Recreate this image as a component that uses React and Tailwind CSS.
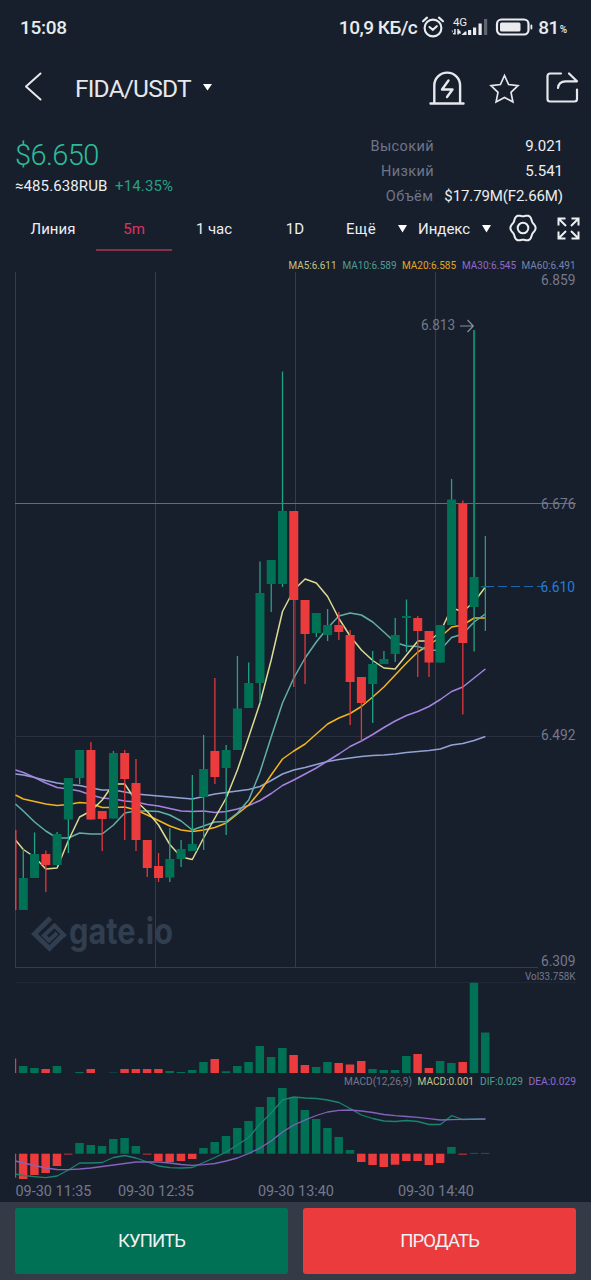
import React from 'react';

// [direction, high, body top, body bottom, low] in chart pixels
const CANDLES = [
  ['up', 849, 878, 910, 910],
  ['up', 832.5, 854, 878, 878],
  ['down', 850.5, 854, 865, 892],
  ['up', 832, 834, 865, 865],
  ['up', 778, 778, 819.5, 853],
  ['up', 750, 750, 778, 784],
  ['down', 742, 750, 819.5, 820],
  ['down', 811, 811, 819, 851],
  ['up', 751, 753, 818.5, 818.5],
  ['down', 750, 753, 779, 840],
  ['down', 759, 783, 840, 851],
  ['down', 840, 840, 868, 877],
  ['down', 853, 866, 878, 882],
  ['up', 828, 859, 877.5, 882],
  ['up', 840, 849, 859, 867],
  ['up', 775, 844, 851, 851],
  ['up', 735, 769, 797, 850],
  ['down', 678, 751, 777, 784],
  ['up', 745, 750, 768, 835],
  ['up', 656, 708.5, 750, 750],
  ['up', 662.5, 683, 708, 708],
  ['up', 561.5, 593, 683, 703],
  ['up', 560, 560, 584, 612],
  ['up', 371.5, 511, 584, 587],
  ['down', 511, 511, 600, 687],
  ['down', 600, 600, 634, 684],
  ['up', 613, 613, 633, 637],
  ['up', 609, 625, 635, 641],
  ['down', 612, 625, 632, 640],
  ['down', 630, 635, 682, 725],
  ['down', 677, 677, 703, 741],
  ['up', 651, 664, 684, 723],
  ['up', 651, 659, 664, 664],
  ['up', 618, 635, 654, 662],
  ['up', 599.5, 616, 618, 652],
  ['down', 616, 618, 631, 677],
  ['down', 631, 631, 662.5, 677],
  ['up', 625, 625, 662.5, 662.5],
  ['up', 479, 499.5, 625, 625],
  ['down', 500.5, 504, 643, 714.5],
  ['up', 330, 577, 607, 651.5],
  ['up', 536, 586, 587.5, 631],
];

// first value sits on the left edge, the rest on the candle centres
const MA_LINES = [
  {
    color: '#93a3d6',
    values: [774, 775, 777.5, 780.5, 783, 784.5, 785.5, 788, 790, 790, 792, 794, 795, 796, 797, 798, 799, 796.5, 794, 792.5, 791, 789.5, 786.5, 780.5, 774, 770, 767.5, 764.5, 761.5, 759.5, 758, 756.5, 755.5, 755, 754, 752.5, 751.5, 750.5, 749, 745, 743.5, 740.5, 736.5],
  },
  {
    color: '#a583e0',
    values: [770, 772.5, 777.5, 783, 787.5, 789, 791, 795, 798, 799, 801, 802, 804.5, 806, 808.5, 811, 811.5, 811, 812.5, 811.5, 809, 805.5, 800.5, 793.5, 785.5, 780, 774, 768, 761, 754, 746.5, 741, 734.5, 727.5, 721, 715.5, 711.5, 706.5, 699.5, 691.5, 687, 678, 669],
  },
  {
    color: '#f2b51d',
    values: [795, 799, 801.5, 804, 805.5, 804.5, 802.5, 803.5, 807.5, 807.5, 807, 810, 815, 820.5, 826, 830, 831.5, 830, 827.5, 823, 814, 805, 791.5, 775, 759, 751, 744, 734, 724, 718, 713.5, 706.5, 697, 687, 675, 663, 652, 645, 637, 627, 625, 618, 618],
  },
  {
    color: '#60b0a6',
    values: [804, 811, 822, 831, 838, 838, 833, 834, 834, 825, 813, 811, 811, 811.5, 815, 821, 830, 826, 822, 821.5, 813, 800, 772, 737, 703, 678, 658, 642, 628, 616, 613, 615, 622, 632, 642.5, 646, 646.5, 650.5, 650, 637.5, 634, 622, 614],
  },
  {
    color: '#dcdc92',
    values: [840, 849.5, 857, 869, 868, 840.5, 817, 811, 800, 784, 784, 801, 811.5, 825, 844.5, 857, 859.5, 838, 818, 798, 770, 737, 703, 660, 611.5, 590, 579, 583, 596.5, 618.5, 636, 650, 660.5, 668, 669, 655, 641, 641, 632, 608, 611.5, 602, 587],
  },
];

const VOLUMES = [1066, 1068, 1069, 1066, 1073, 1072, 1069, 1073, 1072.6, 1069, 1069, 1069, 1069, 1071, 1072, 1070, 1062, 1059, 1071.3, 1066, 1062, 1046, 1057, 1048, 1055, 1065, 1067, 1062, 1063, 1064.5, 1061, 1069, 1070, 1070, 1056, 1054, 1068, 1061, 1063, 1062, 982.7, 1032.5];

const MACD_BASE = 1153.7;
const MACD = [1179, 1175, 1173, 1166, 1154.5, 1143, 1145, 1146, 1139, 1138, 1146, 1154.5, 1161, 1162, 1161, 1159, 1148, 1142, 1136, 1128, 1121, 1107, 1097, 1088, 1097, 1110, 1119, 1128, 1137, 1150, 1162, 1165, 1167, 1164.7, 1161, 1161, 1165, 1163, 1147, 1154.6, 1152.9, 1152.9];

const DIF = [1174, 1175.5, 1176.7, 1177.7, 1176, 1170, 1163, 1163, 1162.5, 1157.5, 1155.5, 1158, 1162, 1166, 1167.7, 1168, 1167.5, 1162.5, 1157.5, 1152, 1145, 1137.5, 1124, 1113, 1100, 1097, 1098, 1098.5, 1100, 1102.5, 1108.5, 1115, 1118.5, 1121, 1121.5, 1120.5, 1121.5, 1124.5, 1124.5, 1115.7, 1119.5, 1119, 1119];
const DEA = [1161, 1163, 1165.5, 1168, 1169.5, 1169.7, 1169, 1168, 1166.5, 1165, 1163.5, 1162, 1162, 1162, 1163, 1164.5, 1165.3, 1164.7, 1163.5, 1161, 1158, 1153.5, 1148, 1141, 1132, 1125, 1120, 1115.5, 1112, 1110.3, 1110, 1111, 1112.5, 1114.5, 1115.7, 1116.5, 1117.3, 1118.7, 1120, 1119.7, 1119.3, 1119.3, 1119];

const GREEN = '#017156';
const RED = '#eb3b3d';

const xAt = (i) => 23.3 + i * 11.27;

const toPoints = (values) =>
  values.map((y, i) => `${i === 0 ? 15.5 : xAt(i - 1).toFixed(1)},${y}`).join(' ');

// six rounded teeth, slightly taller than wide
const gearPoints = Array.from({ length: 72 }, (_, i) => {
  const a = (i * Math.PI) / 36;
  const r = 11.7 + 0.9 * Math.cos(6 * a);
  return `${(14 + r * Math.cos(a)).toFixed(2)},${(14 + r * 1.08 * Math.sin(a)).toFixed(2)}`;
}).join(' ');

const Label = ({ x, y, w, size = 15, fill = '#73798c', children }) => (
  <text x={x} y={y} textLength={w} lengthAdjust="spacingAndGlyphs" fontSize={size} fill={fill}>
    {children}
  </text>
);

const StatusBar = () => (
  <div className="flex h-[54px] items-center justify-between pl-[20px] pr-[24px] text-[#e9ebee]">
    <span className="text-[19px] font-medium leading-none tracking-[-0.3px]">15:08</span>
    <div className="flex items-center">
      <span className="text-[19px] font-medium leading-none tracking-[-0.5px]">10,9 КБ/с</span>
      <svg className="ml-[4px]" width="24" height="24" viewBox="0 0 24 24" fill="none" stroke="currentColor" strokeWidth="2.1" strokeLinecap="round">
        <circle cx="12" cy="13" r="8.4" />
        <path d="M8.500 12l3.300 2.800 4-3.600M2 6.200l4-3.600M22 6.200l-4-3.600" />
      </svg>
      <svg className="ml-[6px]" width="38" height="24" viewBox="0 0 38 24" fill="currentColor">
        <text x="2" y="10.500" fontSize="11.500" textLength="14">4G</text>
        <path d="M0.500 15.500h1.200V18h1.500V14h1.500v5.500H2.600zM6.300 19.500V14h1.500v1.500l1.400 0 .8 3H7.800v1z" />
        <path d="M10.500 20l3.500-3.500h1.500V20z" />
        <rect x="17" y="15" width="3.200" height="5" />
        <rect x="22" y="12.500" width="3.200" height="7.500" />
        <rect x="27.500" y="8.500" width="3.200" height="11.500" />
        <rect x="33" y="4" width="3.200" height="16" opacity="0.35" />
      </svg>
      <svg className="ml-[6px]" width="38" height="18" viewBox="0 0 38 18">
        <rect x="2" y="1.500" width="31.500" height="15" rx="4.500" fill="none" stroke="currentColor" strokeWidth="2.200" />
        <rect x="5" y="4.500" width="20.500" height="9" rx="1.500" fill="currentColor" />
        <rect x="35.500" y="6.500" width="1.800" height="5" rx="0.900" fill="currentColor" />
      </svg>
      <span className="ml-[5px] text-[19px] font-medium leading-none tracking-[-0.6px]">81</span>
      <span className="mt-[5px] ml-px text-[10px] font-medium leading-none">%</span>
    </div>
  </div>
);

const Header = () => (
  <header className="flex h-[70px] items-center pl-[23px] pr-[10px] text-[#e6e8ec]">
    <svg className="-mt-1" width="19" height="30" viewBox="0 0 19 30" fill="none" stroke="currentColor" strokeWidth="2" strokeLinecap="round" strokeLinejoin="round">
      <path d="M17.500 1.500L3 14.500l14.500 13" />
    </svg>
    <h1 className="ml-[33px] mt-[1px] w-[116px] whitespace-nowrap text-[24.5px] leading-none tracking-[-0.8px]">FIDA/USDT</h1>
    <svg className="-mt-1 ml-[12px]" width="9" height="7" viewBox="0 0 9 7" fill="#fff">
      <path d="M0 0h9L4.500 6.500z" />
    </svg>
    <svg className="-mt-[2px] ml-auto" width="36" height="36" viewBox="0 0 36 36" fill="none" stroke="currentColor" strokeWidth="2.400" strokeLinecap="round" strokeLinejoin="round">
      <path d="M1.500 33.500h33M5.300 33V15.500a12.900 12.900 0 0 1 25.800 0V33" />
      <path d="M19.500 10.500L13 19.500h10.500L18 27" />
    </svg>
    <svg className="ml-[24px]" width="32" height="32" viewBox="0 0 32 32" fill="none" stroke="currentColor" strokeWidth="1.700" strokeLinejoin="miter">
      <path d="M15.500 2.500l4.100 9 9.400 1.200-7 6.700 1.900 9.500-8.400-4.500-8.400 4.500 1.900-9.500-7-6.700 9.400-1.200z" />
    </svg>
    <svg className="-mt-[2px] ml-[24px]" width="36" height="34" viewBox="0 0 36 34" fill="none" stroke="currentColor" strokeWidth="2.200" strokeLinecap="round" strokeLinejoin="round">
      <path d="M16 2.500H5A2.500 2.500 0 0 0 2.500 5v23A2.500 2.500 0 0 0 5 30.500h24.500A2.500 2.500 0 0 0 32 28V18.500" />
      <path d="M13 17c.4-4 3-6.500 7.500-6.600L32 10.300 24 2.500" />
    </svg>
  </header>
);

const STATS = [
  { label: 'Высокий', value: '9.021' },
  { label: 'Низкий', value: '5.541' },
  { label: 'Объём', value: '$17.79M(F2.66M)' },
];

const PriceInfo = () => (
  <section className="flex h-[84px] justify-between pl-[15px] pr-[28px]">
    <div className="flex flex-col pt-[15px]">
      <div className="text-[29px] font-light leading-[32px] tracking-[-0.6px] text-[#2bbd9a]">$6.650</div>
      <div className="mt-[7px] flex text-[15px] leading-[16px]">
        <span className="w-[100px] whitespace-nowrap tracking-[0.1px] text-[#eceef1]">≈485.638RUB</span>
        <span className="tracking-[0.15px] text-[#2a9f85]">+14.35%</span>
      </div>
    </div>
    <div className="flex flex-col pt-[10px] text-[15px] leading-[25px]">
      {STATS.map(({ label, value }) => (
        <div key={label} className="flex justify-end">
          <span className="text-[14.5px] tracking-[0.4px] text-[#6f7588]">{label}</span>
          <span className={`text-right text-[#eceef1] ${label === 'Объём' ? 'ml-[11px] tracking-[-0.1px]' : 'w-[129px]'}`}>{value}</span>
        </div>
      ))}
    </div>
  </section>
);

const Caret = () => (
  <svg width="9" height="8" viewBox="0 0 9 8" fill="#fff">
    <path d="M0 0h9L4.500 7.500z" />
  </svg>
);

const Toolbar = () => (
  <nav className="flex h-[44px] text-[15px] leading-[42px] text-[#eceef1]">
    <span className="ml-[15px] w-[76px] text-center">Линия</span>
    <span className="ml-[5px] h-[43px] w-[76px] border-b-2 border-[#86304a] text-center text-[#e0315f]">5m</span>
    <span className="ml-[4px] w-[76px] text-center tracking-[-0.1px]">1 час</span>
    <span className="ml-[5px] w-[76px] text-center">1D</span>
    <div className="ml-[13px] flex w-[61px] items-center justify-between pb-[2px]">
      <span className="tracking-[0.3px]">Ещё</span>
      <Caret />
    </div>
    <div className="ml-[11px] flex w-[73px] items-center justify-between pb-[2px]">
      <span>Индекс</span>
      <Caret />
    </div>
    <svg className="ml-[18px] mt-[6px]" width="28" height="28" viewBox="0 0 28 28" fill="none" stroke="currentColor" strokeWidth="2">
      <polygon points={gearPoints} strokeLinejoin="round" />
      <circle cx="14" cy="14" r="5.300" />
    </svg>
    <svg className="ml-[20px] mt-[9px]" width="23" height="23" viewBox="0 0 23 23" fill="none" stroke="currentColor" strokeWidth="2">
      <path d="M1.500 8.500v-7h7M1.500 1.500l7.500 7.500M14.500 1.500h7v7M21.500 1.500L14 9M1.500 14.500v7h7M1.500 21.500L9 14M14.500 21.500h7v-7M21.500 21.500L14 14" />
    </svg>
  </nav>
);

const Watermark = () => (
  <g>
    <g fill="none" stroke="#303e50" strokeWidth="4.800">
      <path d="M50.500 918L34.500 934 49.500 948.500 63 935" />
      <path d="M65.500 936.500L54.500 925.500 44 935.500l5 5 8-7.500" strokeWidth="4" />
    </g>
    <text x="69" y="944" textLength="104" lengthAdjust="spacingAndGlyphs" fontSize="36" fontWeight="700" fill="#303e50" className="font-['Inter',sans-serif]">
      gate.io
    </text>
  </g>
);

const Chart = () => (
  <svg className="block" width="591" height="950" viewBox="0 252 591 950">
    <Watermark />

    {/* Grid */}
    <g stroke="#353b4b" strokeWidth="1">
      {[15.5, 155.5, 295.5, 435.5].map((x) => (
        <line key={x} x1={x} x2={x} y1="272" y2="967" />
      ))}
      <line x1="15" x2="576" y1="503.500" y2="503.500" stroke="#666c7a" />
      <line x1="15" x2="540" y1="736.500" y2="736.500" stroke="#2a303f" />
      <line x1="15" x2="538" y1="967.500" y2="967.500" />
      <line x1="15" x2="576" y1="982.500" y2="982.500" stroke="#1f2634" />
    </g>

    {/* Moving averages */}
    <g fill="none" strokeWidth="1.500" strokeLinejoin="round">
      {MA_LINES.map(({ color, values }) => (
        <polyline key={color} points={toPoints(values)} stroke={color} />
      ))}
    </g>

    {/* Candles */}
    <rect x="15" y="830" width="1.500" height="80" fill={RED} />
    {CANDLES.map(([dir, high, top, bottom, low], i) => (
      <g key={i}>
        <line x1={xAt(i)} x2={xAt(i)} y1={high} y2={low} stroke={dir === 'up' ? '#1fa385' : '#e2383d'} strokeWidth={1.3} />
        <rect x={xAt(i) - 4.5} y={top} width="9" height={bottom - top} fill={dir === 'up' ? GREEN : RED} />
      </g>
    ))}
    <rect x="473.200" y="330" width="2" height="247" fill="#128468" />
    <line x1="485" x2="541" y1="586.500" y2="586.500" stroke="#1b68b0" strokeWidth="1.200" strokeDasharray="9 4" />

    {/* Price labels */}
    <Label x={421} y={330} w={34}>6.813</Label>
    <path d="M460 326h13M467.500 320l5.800 6-5.800 6" fill="none" stroke="#8a8fa0" strokeWidth="1.200" />
    <Label x={541} y={285} w={34.5}>6.859</Label>
    <Label x={541} y={508.5} w={34.5}>6.676</Label>
    <Label x={540.5} y={592} w={34.5} fill="#1f7fdb">6.610</Label>
    <Label x={541} y={740} w={34.5}>6.492</Label>
    <Label x={541} y={965.5} w={34.5}>6.309</Label>

    <Label x={288.5} y={269} w={48} size={10.5} fill="#c4c486">MA5:6.611</Label>
    <Label x={342.5} y={269} w={54} size={10.5} fill="#4e9e95">MA10:6.589</Label>
    <Label x={402} y={269} w={54} size={10.5} fill="#e3a81e">MA20:6.585</Label>
    <Label x={462} y={269} w={54} size={10.5} fill="#8f6ac9">MA30:6.545</Label>
    <Label x={521.5} y={269} w={54} size={10.5} fill="#7683ad">MA60:6.491</Label>

    {/* Volume */}
    <rect x="15" y="1058.500" width="1.200" height="14.500" fill={RED} />
    {VOLUMES.map((y, i) => (
      <rect key={i} x={xAt(i) - 4.4} y={y} width="8.500" height={1073 - y} fill={CANDLES[i][0] === 'up' ? GREEN : RED} />
    ))}
    <Label x={525} y={979.5} w={50.5} size={10.5}>Vol33.758K</Label>

    {/* MACD */}
    <rect x="15" y={MACD_BASE} width="1.200" height="24" fill={RED} />
    {MACD.map((y, i) => (
      <rect key={i} x={xAt(i) - 4.4} y={Math.min(y, MACD_BASE)} width="8.500" height={Math.abs(y - MACD_BASE)} fill={y < MACD_BASE ? GREEN : RED} />
    ))}
    <g fill="none" strokeWidth="1.300" strokeLinejoin="round">
      <polyline points={toPoints(DIF)} stroke="#1b8370" />
      <polyline points={toPoints(DEA)} stroke="#8463bb" />
    </g>
    <Label x={344} y={1085} w={68} size={10.5}>MACD(12,26,9)</Label>
    <Label x={417.5} y={1085} w={56.5} size={10.5} fill="#c4c486">MACD:0.001</Label>
    <Label x={480} y={1085} w={43} size={10.5} fill="#4e9e95">DIF:0.029</Label>
    <Label x={528.5} y={1085} w={47.5} size={10.5} fill="#8f6ac9">DEA:0.029</Label>

    {/* Time axis */}
    <Label x={15.5} y={1196} w={76}>09-30 11:35</Label>
    <Label x={118} y={1196} w={76}>09-30 12:35</Label>
    <Label x={258} y={1196} w={76}>09-30 13:40</Label>
    <Label x={398} y={1196} w={76}>09-30 14:40</Label>
  </svg>
);

const App = () => {
  return (
    <div className="flex h-[1280px] w-[591px] flex-col overflow-hidden bg-[#181f2c] font-['Roboto','Noto_Sans',sans-serif]">
      <StatusBar />
      <Header />
      <PriceInfo />
      <Toolbar />
      <Chart />
      <footer className="flex h-[78px] gap-[15px] bg-[#343a46] px-[15px] pt-[6px] text-[18.5px] tracking-[-0.9px] text-[#eef2f2]">
        <button className="h-[66px] flex-1 rounded-[3px] bg-[#017156] pt-[2px]">КУПИТЬ</button>
        <button className="h-[66px] flex-1 rounded-[3px] bg-[#eb3b3d] pt-[2px]">ПРОДАТЬ</button>
      </footer>
    </div>
  );
};

export default App;
